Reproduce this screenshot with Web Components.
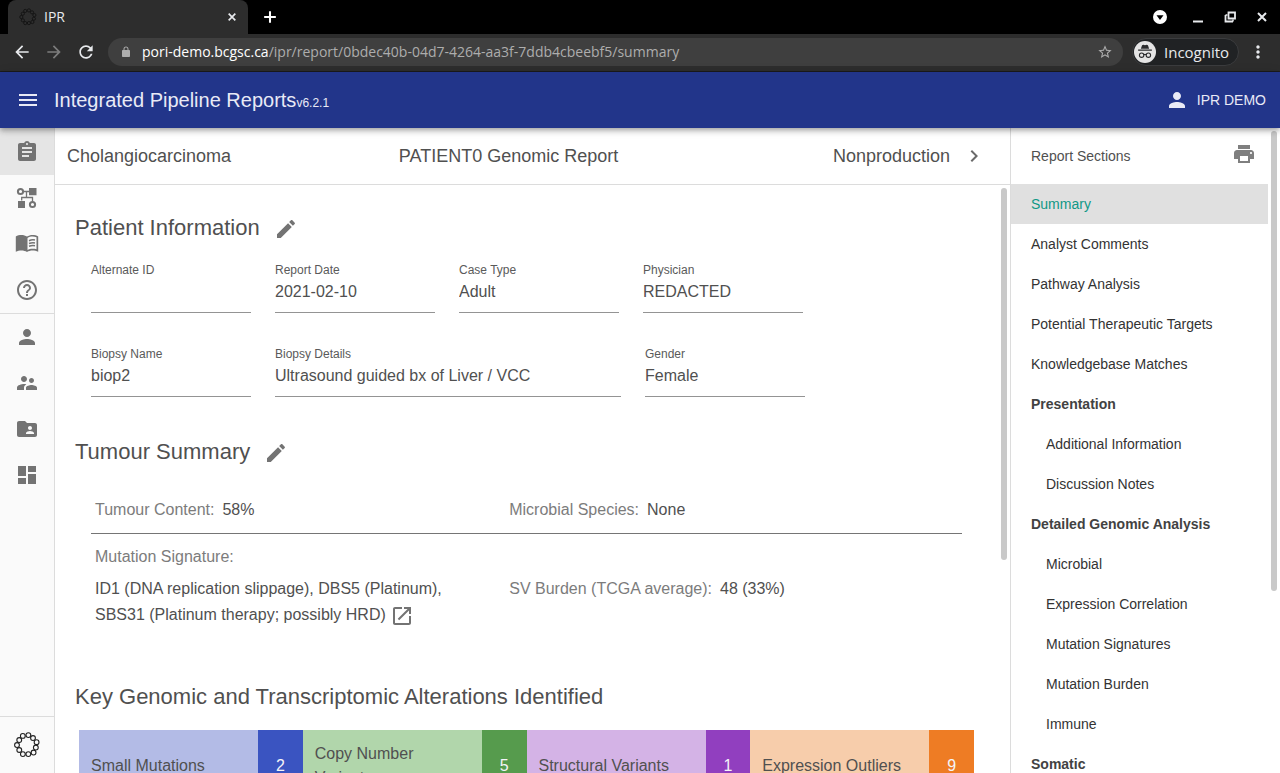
<!DOCTYPE html>
<html lang="en">
<head>
<meta charset="utf-8">
<title>IPR</title>
<style>
  html, body { margin: 0; height: 100%; }
  body {
    overflow: hidden;
    font-family: "Liberation Sans", Arial, sans-serif;
    color: #505050;
    background: #fff;
  }
</style>
</head>
<body>
<ipr-window></ipr-window>

<script>
const ring = (r, w) => Array.from({ length: 11 }, (_, i) => {
  const a = (i * 360 / 11 - 82) * Math.PI / 180;
  const d = i % 2 ? 9.2 : 10;
  return `<circle cx="${(12 + d * Math.cos(a)).toFixed(2)}" cy="${(12 + d * Math.sin(a)).toFixed(2)}" r="${r}" fill="none" stroke="currentColor" stroke-width="${w}"/>`;
}).join('');
const p = d => `<path d="${d}"/>`;
const ICONS = {
  menu: p('M3 18h18v-2H3v2zm0-5h18v-2H3v2zm0-7v2h18V6H3z'),
  person: p('M12 12c2.21 0 4-1.79 4-4s-1.79-4-4-4-4 1.790-4 4 1.790 4 4 4zm0 2c-2.670 0-8 1.340-8 4v2h16v-2c0-2.660-5.330-4-8-4z'),
  assignment: p('M19 3h-4.180C14.400 1.840 13.300 1 12 1c-1.300 0-2.400.840-2.820 2H5c-1.100 0-2 .900-2 2v14c0 1.100.900 2 2 2h14c1.100 0 2-.900 2-2V5c0-1.100-.900-2-2-2zm-7 0c.550 0 1 .450 1 1s-.450 1-1 1-1-.450-1-1 .450-1 1-1zm2 14H7v-2h7v2zm3-4H7v-2h10v2zm0-4H7V7h10v2z'),
  tree: '<g fill="none" stroke="currentColor"><g stroke-width="2"><circle cx="5.500" cy="5.500" r="2.600"/><circle cx="17.500" cy="18.500" r="2.600"/></g><path d="M8 5.500h6M11.500 5.500v6M6.700 14.500v-3h10.800v4" stroke-width="1.300"/></g><path d="M14 2h7.500v7.200h-7.500zM3 15h7v7h-7z"/>',
  book: p('M12 4.600C10.500 3.500 8.500 3 6.500 3 4.500 3 2.300 3.400.8 4.500v15.300c1.700-.9 3.700-1.300 5.700-1.300 1.900 0 4 .5 5.500 1.500 1.500-1 3.600-1.500 5.500-1.500 2 0 4 .4 5.700 1.300V4.500C21.700 3.400 19.500 3 17.500 3c-2 0-4 .5-5.500 1.600zm9.500 12.700c-1.200-.4-2.600-.5-4-.5-1.700 0-3.700.5-5 1.300V6c1.500-.9 3.300-1.400 5-1.400 1.400 0 2.800.2 4 .6v12.100z') + '<path d="M14 8.700q3-1.300 6-.6M14 11.500q3-1.300 6-.6M14 14.300q3-1.300 6-.6" fill="none" stroke="currentColor" stroke-width="1.500"/>',
  help: p('M11 18h2v-2h-2v2zm1-16C6.480 2 2 6.480 2 12s4.480 10 10 10 10-4.480 10-10S17.520 2 12 2zm0 18c-4.410 0-8-3.590-8-8s3.590-8 8-8 8 3.590 8 8-3.590 8-8 8zm0-14c-2.210 0-4 1.790-4 4h2c0-1.100.900-2 2-2s2 .900 2 2c0 2-3 1.750-3 5h2c0-2.250 3-2.500 3-5 0-2.210-1.790-4-4-4z'),
  people: p('M16.500 12c1.380 0 2.490-1.120 2.490-2.500S17.880 7 16.500 7 14 8.120 14 9.500s1.120 2.500 2.500 2.500zM9 11c1.660 0 2.990-1.340 2.990-3S10.660 5 9 5 6 6.340 6 8s1.340 3 3 3zm7.500 3c-1.830 0-5.500.920-5.500 2.750V19h11v-2.250c0-1.830-3.670-2.750-5.500-2.750zM9 13c-2.330 0-7 1.170-7 3.500V19h7v-2.250c0-.850.330-2.340 2.370-3.470C10.500 13.100 9.660 13 9 13z'),
  folder: p('M20 6h-8l-2-2H4c-1.100 0-1.990.900-1.990 2L2 18c0 1.100.900 2 2 2h16c1.100 0 2-.900 2-2V8c0-1.100-.900-2-2-2zm-5 3c1.100 0 2 .900 2 2s-.900 2-2 2-2-.900-2-2 .900-2 2-2zm4 8h-8v-1c0-1.330 2.670-2 4-2s4 .670 4 2v1z'),
  dashboard: p('M3 13h8V3H3v10zm0 8h8v-6H3v6zm10 0h8V11h-8v10zm0-18v6h8V3h-8z'),
  edit: p('M3 17.250V21h3.750L17.810 9.940l-3.750-3.750L3 17.250zM20.710 7.040c.390-.390.390-1.020 0-1.410l-2.340-2.340c-.390-.390-1.020-.390-1.410 0l-1.830 1.830 3.750 3.750 1.830-1.830z'),
  open: p('M19 19H5V5h7V3H5c-1.110 0-2 .900-2 2v14c0 1.100.890 2 2 2h14c1.100 0 2-.900 2-2v-7h-2v7zM14 3v2h3.590l-9.830 9.830 1.410 1.410L19 6.410V10h2V3h-7z'),
  print: p('M19 8H5c-1.660 0-3 1.340-3 3v6h4v4h12v-4h4v-6c0-1.660-1.340-3-3-3zm-3 11H8v-5h8v5zm3-7c-.550 0-1-.450-1-1s.450-1 1-1 1 .450 1 1-.450 1-1 1zm-1-9H6v4h12V3z'),
  chevron: p('M10 6L8.590 7.410 13.170 12l-4.580 4.590L10 18l6-6z'),
  back: p('M20 11H7.830l5.590-5.590L12 4l-8 8 8 8 1.410-1.410L7.830 13H20v-2z'),
  forward: p('M12 4l-1.410 1.410L16.170 11H4v2h12.170l-5.580 5.590L12 20l8-8z'),
  reload: p('M17.650 6.350C16.200 4.900 14.210 4 12 4c-4.420 0-7.990 3.580-7.990 8s3.570 8 7.990 8c3.730 0 6.840-2.550 7.730-6h-2.080c-.820 2.330-3.040 4-5.650 4-3.310 0-6-2.690-6-6s2.690-6 6-6c1.660 0 3.140.690 4.220 1.780L13 11h7V4l-2.350 2.350z'),
  lock: p('M18 8h-1V6c0-2.760-2.240-5-5-5S7 3.240 7 6v2H6c-1.100 0-2 .900-2 2v10c0 1.100.900 2 2 2h12c1.100 0 2-.900 2-2V10c0-1.100-.900-2-2-2zM9 6c0-1.710 1.290-3 3-3s3 1.290 3 3v2H9V6z'),
  star: p('M22 9.240l-7.190-.620L12 2 9.190 8.630 2 9.240l5.460 4.730L5.820 21 12 17.270 18.180 21l-1.630-7.030L22 9.240zM12 15.400l-3.760 2.270 1-4.280-3.320-2.880 4.380-.380L12 6.100l1.710 4.040 4.380.380-3.320 2.880 1 4.280L12 15.400z'),
  more: p('M12 8c1.100 0 2-.900 2-2s-.900-2-2-2-2 .900-2 2 .900 2 2 2zm0 2c-1.100 0-2 .900-2 2s.900 2 2 2 2-.900 2-2-.900-2-2-2zm0 6c-1.100 0-2 .900-2 2s.900 2 2 2 2-.900 2-2-.900-2-2-2z'),
  close: '<path d="M4 4l16 16M20 4L4 20" fill="none" stroke="currentColor" stroke-width="4"/>',
  plus: '<path d="M12 2v20M2 12h20" fill="none" stroke="currentColor" stroke-width="3.500"/>',
  minimise: '<path d="M2 19h20v4H2z"/>',
  restore: '<path d="M9 3h13v12H9z M3 8v13h15" fill="none" stroke="currentColor" stroke-width="3.600"/><path d="M3 8h4M18 21v-4" stroke="currentColor" stroke-width="3"/>',
  drop: '<path fill-rule="evenodd" d="M12 0a12 12 0 100 24 12 12 0 000-24zM6 9h12l-6 8z"/>',
  incognito: '<circle cx="12" cy="12" r="12" fill="#e4e4e4"/><g fill="#2a2b2d"><path d="M8.800 4.500l1.400-.3 1.800.5 1.800-.5 1.400.3 1.300 4H7.500zM4.500 9.300h15v1.400h-15z"/></g><g fill="none" stroke="#2a2b2d" stroke-width="1.200"><circle cx="8.300" cy="15.500" r="2.400"/><circle cx="15.700" cy="15.500" r="2.400"/><path d="M10.700 15q1.300-.8 2.600 0"/></g>',
  ring: ring(2.4, 1.1),
  ringsmall: ring(2.4, 1.3)
};

function define(name, html, setup) {
  const tpl = document.createElement('template');
  tpl.innerHTML = html;
  customElements.define(name, class extends HTMLElement {
    connectedCallback() {
      if (this.shadowRoot) return;
      const root = this.attachShadow({ mode: 'open' });
      root.append(tpl.content.cloneNode(true));
      if (setup) setup(this, root);
    }
  });
}

define('ipr-icon', `
  <style>
    :host { display: block; width: 24px; height: 24px; flex: none; }
    svg { display: block; width: 100%; height: 100%; fill: currentColor; overflow: visible; }
  </style>
  <svg viewBox="0 0 24 24" aria-hidden="true"></svg>`,
  (el, root) => { root.querySelector('svg').innerHTML = ICONS[el.getAttribute('name')]; });

define('icon-button', `
  <style>
    :host { display: block; flex: none; }
    button { display: flex; align-items: center; justify-content: center; width: 100%; height: 100%; margin: 0; padding: 0; border: 0; background: none; color: inherit; cursor: pointer; }
  </style>
  <button type="button"><slot></slot></button>`,
  (el, root) => root.querySelector('button').setAttribute('aria-label', el.getAttribute('label')));

define('browser-chrome', `
  <style>
    :host { display: block; flex: none; background: #000; color: #e8eaed; font-family: "Open Sans", "Noto Sans", sans-serif; font-size: 14px; line-height: 20px; border-bottom: 1px solid #1c1c1e; }
    .strip { display: flex; align-items: center; height: 34px; padding: 0 2px 0 8px; }
    .tab { display: flex; align-items: center; box-sizing: border-box; width: 240px; height: 34px; padding: 0 10px 0 12px; gap: 8px; background: #2d2d2d; border-radius: 8px 8px 0 0; }
    .tab span { flex: 1; }
    .favicon { width: 16px; height: 16px; color: #111; }
    .tab icon-button { width: 12px; height: 12px; }
    .new { width: 44px; height: 34px; color: #fff; }
    .s12 { width: 12px; height: 12px; }
    .s10 { width: 10px; height: 10px; }
    .space { flex: 1; }
    .win { width: 32px; height: 34px; }
    .first { margin-right: 6px; color: #fff; }
    .s14 { width: 14px; height: 14px; }
    .bar { display: flex; align-items: center; height: 36px; padding: 0 6px 1px; background: #2d2d2d; }
    .bar > icon-button { width: 32px; height: 32px; }
    .s20 { width: 20px; height: 20px; }
    .dim { color: #7c7c7c; }
    .omni { display: flex; align-items: center; flex: 1; height: 28px; margin: 0 9px 0 6px; padding: 0 10px 0 12px; gap: 10px; border-radius: 14px; background: #3f3f3f; color: #adadad; white-space: nowrap; }
    .omni span { flex: 1; }
    .omni b { font-weight: 400; color: #fff; }
    .omni .s16, .omni icon-button { width: 16px; height: 16px; }
    .mode { display: flex; align-items: center; box-sizing: border-box; width: 107px; height: 28px; padding: 0 1px; gap: 8px; border: 1px solid #3b3c3e; border-radius: 14px; background: #202224; font-size: 15px; }
    .mode ipr-icon { width: 22px; height: 22px; }
    .bar > .kebab { width: 32px; margin: 0 0 0 3px; }
  </style>
  <div class="strip">
    <div class="tab"><ipr-icon class="favicon" name="ringsmall"></ipr-icon><span>IPR</span>
      <icon-button label="Close tab"><ipr-icon class="s10" name="close"></ipr-icon></icon-button></div>
    <icon-button class="new" label="New tab"><ipr-icon class="s14" name="plus"></ipr-icon></icon-button>
    <div class="space"></div>
    <icon-button class="win first" label="Search tabs"><ipr-icon class="s14" name="drop"></ipr-icon></icon-button>
    <icon-button class="win" label="Minimise"><ipr-icon class="s12" name="minimise"></ipr-icon></icon-button>
    <icon-button class="win" label="Restore"><ipr-icon class="s12" name="restore"></ipr-icon></icon-button>
    <icon-button class="win" label="Close"><ipr-icon class="s12" name="close"></ipr-icon></icon-button>
  </div>
  <div class="bar">
    <icon-button label="Back"><ipr-icon class="s20" name="back"></ipr-icon></icon-button>
    <icon-button class="dim" label="Forward"><ipr-icon class="s20" name="forward"></ipr-icon></icon-button>
    <icon-button label="Reload"><ipr-icon class="s20" name="reload"></ipr-icon></icon-button>
    <div class="omni"><ipr-icon class="s12" name="lock"></ipr-icon><span><b>pori-demo.bcgsc.ca</b>/ipr/report/0bdec40b-04d7-4264-aa3f-7ddb4cbeebf5/summary</span>
      <icon-button label="Bookmark"><ipr-icon class="s16" name="star"></ipr-icon></icon-button></div>
    <div class="mode"><ipr-icon name="incognito"></ipr-icon>Incognito</div>
    <icon-button class="kebab" label="More"><ipr-icon class="s20" name="more"></ipr-icon></icon-button>
  </div>`);

define('app-bar', `
  <style>
    :host { display: flex; align-items: center; flex: none; height: 56px; padding: 0 14px 0 12px; background: #22358a; color: #e9eaf6; position: relative; z-index: 2; box-shadow: 0 2px 4px -1px rgba(0,0,0,.2), 0 4px 5px rgba(0,0,0,.14), 0 1px 10px rgba(0,0,0,.12); }
    .menu { width: 32px; height: 32px; }
    .name { flex: 1; display: flex; align-items: baseline; margin-left: 10px; }
    h1 { margin: 0; font-size: 20px; line-height: 32px; font-weight: 400; }
    small { font-size: 12px; }
    .user { display: flex; align-items: center; gap: 8px; margin: 0; padding: 0; border: 0; background: none; color: inherit; font: inherit; font-size: 14px; line-height: 24px; }
  </style>
  <icon-button class="menu" label="Menu"><ipr-icon name="menu"></ipr-icon></icon-button>
  <div class="name"><h1>Integrated Pipeline Reports</h1><small>v6.2.1</small></div>
  <button class="user" type="button"><ipr-icon name="person"></ipr-icon>IPR DEMO</button>`);

define('rail-link', `
  <style>
    :host { display: block; }
    a { display: flex; align-items: center; justify-content: center; height: 46px; color: #737373; }
    :host([active]) a { height: 47px; background: #e5e5e5; }
  </style>
  <a href="#"><ipr-icon></ipr-icon></a>`,
  (el, root) => {
    root.querySelector('a').setAttribute('aria-label', el.getAttribute('label'));
    const icon = document.createElement('ipr-icon');
    icon.setAttribute('name', el.getAttribute('icon'));
    root.querySelector('ipr-icon').replaceWith(icon);
  });

define('nav-rail', `
  <style>
    :host { display: flex; flex-direction: column; flex: none; width: 54px; border-right: 1px solid #dcdcdc; background: #fafafa; }
    nav { flex: 1; }
    .group { border-bottom: 1px solid #dcdcdc; }
    .logo { display: flex; align-items: center; justify-content: center; height: 56px; border-top: 1px solid #dcdcdc; color: #222; }
  </style>
  <nav>
    <div class="group">
      <rail-link active icon="assignment" label="Reports"></rail-link>
      <rail-link icon="tree" label="GraphKB"></rail-link>
      <rail-link icon="book" label="Germline"></rail-link>
      <rail-link icon="help" label="Help"></rail-link>
    </div>
    <rail-link icon="person" label="Users"></rail-link>
    <rail-link icon="people" label="Groups"></rail-link>
    <rail-link icon="folder" label="Projects"></rail-link>
    <rail-link icon="dashboard" label="Templates"></rail-link>
  </nav>
  <div class="logo"><ipr-icon name="ring"></ipr-icon></div>`);

define('scroll-thumb', `
  <style>
    :host { display: block; flex: none; box-sizing: border-box; width: 12px; padding: 3px; }
    div { width: 6px; border-radius: 3px; background: #c9c9c9; }
  </style>
  <div></div>`,
  (el, root) => { root.querySelector('div').style.height = el.getAttribute('size'); });

define('report-header', `
  <style>
    :host { display: grid; grid-template-columns: 1fr auto 1fr auto; align-items: center; flex: none; height: 56px; padding: 0 24px 0 12px; border-bottom: 1px solid #dcdcdc; font-size: 18px; line-height: 28px; }
    .end { text-align: right; }
    icon-button { margin-left: 12px; color: #6a6a6a; }
  </style>
  <span>Cholangiocarcinoma</span><span>PATIENT0 Genomic Report</span>
  <span class="end">Nonproduction</span><icon-button label="Next"><ipr-icon name="chevron"></ipr-icon></icon-button>`);

define('section-title', `
  <style>
    :host { display: flex; align-items: center; gap: 14px; height: 48px; }
    h2 { margin: 0; font-size: 22px; line-height: 32px; font-weight: 400; }
    icon-button { color: #737373; padding-top: 2px; }
    :host([plain]) icon-button { display: none; }
  </style>
  <h2><slot></slot></h2><icon-button label="Edit"><ipr-icon name="edit"></ipr-icon></icon-button>`);

define('info-field', `
  <style>
    :host { display: block; width: 160px; border-bottom: 1px solid #949494; }
    :host([wide]) { width: 346px; }
    label { display: block; font-size: 12px; line-height: 20px; color: #5a5a5a; }
    input { display: block; box-sizing: border-box; width: 100%; height: 24px; margin: 0 0 8px; padding: 0; border: 0; outline: 0; background: none; color: #505050; font: inherit; font-size: 16px; }
  </style>
  <label for="value"></label><input id="value" type="text" readonly>`,
  (el, root) => {
    root.querySelector('label').textContent = el.getAttribute('label');
    root.querySelector('input').value = el.getAttribute('value');
  });

define('tumour-summary', `
  <style>
    :host { display: block; margin: 0 12px 0 16px; font-size: 16px; line-height: 26px; }
    .row { display: grid; grid-template-columns: 48% 1fr; align-items: center; padding: 10px 4px; }
    .row + .row { border-top: 1px solid #757575; }
    .row:first-child { padding: 12px 4px; }
    .pair { display: flex; gap: 8px; }
    .stack { padding: 0 48px 6px 0; }
    .label { color: #7c7c7c; }
    .value { margin: 6px 0 0; }
    a { display: inline-block; vertical-align: middle; color: #737373; }
  </style>
  <div class="row">
    <div class="pair"><span class="label">Tumour Content:</span><span>58%</span></div>
    <div class="pair"><span class="label">Microbial Species:</span><span>None</span></div>
  </div>
  <div class="row">
    <div class="stack"><div class="label">Mutation Signature:</div>
      <div class="value">ID1 (DNA replication slippage), DBS5 (Platinum),<br>SBS31 (Platinum therapy; possibly HRD) <a href="#" aria-label="Open signatures"><ipr-icon name="open"></ipr-icon></a></div></div>
    <div class="pair"><span class="label">SV Burden (TCGA average):</span><span>48 (33%)</span></div>
  </div>`);

define('alteration-card', `
  <style>
    :host { display: grid; grid-template-columns: 4fr 1fr; min-height: 72px; font-size: 16px; line-height: 24px; }
    span { display: flex; align-items: center; }
    .text { padding: 0 48px 0 12px; background: var(--tint); }
    :host([nowrap]) .text { padding-right: 0; }
    .count { justify-content: center; background: var(--solid); color: #f4f4f8; }
  </style>
  <span class="text"><slot></slot></span><span class="count"></span>`,
  (el, root) => { root.querySelector('.count').textContent = el.getAttribute('count'); });

define('report-summary', `
  <style>
    :host { display: block; flex: 1; min-width: 0; padding: 19px 12px 0 20px; overflow: hidden; }
    .fields { display: flex; flex-wrap: wrap; gap: 31px 24px; padding: 8px 16px 0; }
    .fields + .fields { padding-top: 31px; }
    .gap { margin-top: 31px; }
    tumour-summary { margin-top: 11px; }
    .cards { display: grid; grid-template-columns: repeat(4, 1fr); margin: 9px 0 0 4px; }
    .key { margin-top: 29px; }
    .blue { --tint: #b3bbe6; --solid: #3a54c1; }
    .green { --tint: #b1d6ab; --solid: #569b4d; }
    .purple { --tint: #d4b3e6; --solid: #913fbf; }
    .orange { --tint: #f7cdab; --solid: #ee7c24; }
  </style>
  <section-title>Patient Information</section-title>
  <div class="fields">
    <info-field label="Alternate ID" value=""></info-field>
    <info-field label="Report Date" value="2021-02-10"></info-field>
    <info-field label="Case Type" value="Adult"></info-field>
    <info-field label="Physician" value="REDACTED"></info-field>
  </div>
  <div class="fields">
    <info-field label="Biopsy Name" value="biop2"></info-field>
    <info-field wide label="Biopsy Details" value="Ultrasound guided bx of Liver / VCC"></info-field>
    <info-field label="Gender" value="Female"></info-field>
  </div>
  <section-title class="gap">Tumour Summary</section-title>
  <tumour-summary></tumour-summary>
  <section-title class="key" plain>Key Genomic and Transcriptomic Alterations Identified</section-title>
  <div class="cards">
    <alteration-card nowrap class="blue" count="2">Small Mutations</alteration-card>
    <alteration-card class="green" count="5">Copy Number Variants</alteration-card>
    <alteration-card nowrap class="purple" count="1">Structural Variants</alteration-card>
    <alteration-card nowrap class="orange" count="9">Expression Outliers</alteration-card>
  </div>`);

define('section-nav', `
  <style>
    :host { display: flex; flex: none; width: 269px; border-left: 1px solid #dcdcdc; overflow: hidden; font-size: 14px; line-height: 20px; color: #333; }
    nav { flex: 1; }
    header { display: flex; align-items: center; justify-content: space-between; height: 56px; padding: 0 12px 0 20px; color: #505050; }
    icon-button { color: #7f7f7f; padding-bottom: 4px; }
    a, h3 { display: flex; align-items: center; height: 40px; margin: 0; padding-left: 20px; font-size: 14px; color: inherit; text-decoration: none; }
    .sub { padding-left: 35px; }
    .active { background: #e0e0e0; color: #109886; }
    h3 { color: #424242; }
  </style>
  <nav>
    <header>Report Sections<icon-button label="Print"><ipr-icon name="print"></ipr-icon></icon-button></header>
    <a class="active" href="#">Summary</a>
    <a href="#">Analyst Comments</a>
    <a href="#">Pathway Analysis</a>
    <a href="#">Potential Therapeutic Targets</a>
    <a href="#">Knowledgebase Matches</a>
    <h3>Presentation</h3>
    <a class="sub" href="#">Additional Information</a>
    <a class="sub" href="#">Discussion Notes</a>
    <h3>Detailed Genomic Analysis</h3>
    <a class="sub" href="#">Microbial</a>
    <a class="sub" href="#">Expression Correlation</a>
    <a class="sub" href="#">Mutation Signatures</a>
    <a class="sub" href="#">Mutation Burden</a>
    <a class="sub" href="#">Immune</a>
    <h3>Somatic</h3>
  </nav>
  <scroll-thumb size="72%"></scroll-thumb>`);

define('ipr-window', `
  <style>
    :host { display: flex; flex-direction: column; height: 100vh; overflow: hidden; }
    .body { display: flex; flex: 1; min-height: 0; }
    main { display: flex; flex-direction: column; flex: 1; min-width: 0; }
    .scroll { display: flex; flex: 1; min-height: 0; }
    .gutter { display: flex; justify-content: flex-end; width: 24px; }
  </style>
  <browser-chrome></browser-chrome>
  <app-bar></app-bar>
  <div class="body">
    <nav-rail></nav-rail>
    <main>
      <report-header></report-header>
      <div class="scroll"><report-summary></report-summary><div class="gutter"><scroll-thumb size="64%"></scroll-thumb></div></div>
    </main>
    <section-nav></section-nav>
  </div>`);
</script>
</body>
</html>
